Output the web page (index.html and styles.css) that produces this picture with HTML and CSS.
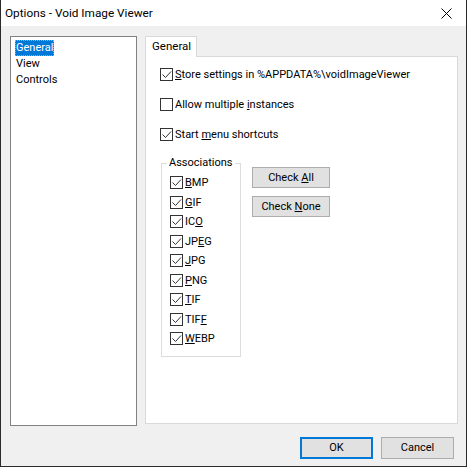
FILE: index.html
```html
<!DOCTYPE html>
<html>
<head>
<meta charset="utf-8">
<link rel="stylesheet" href="styles.css">
</head>
<body>
<div class="window">
  <div class="titlebar">
    <span class="title">Options - Void Image Viewer</span>
    <svg class="close" width="11" height="11" viewBox="0 0 11 11"><path d="M0.5 0.5 L10.5 10.5 M10.5 0.5 L0.5 10.5" stroke="#000" stroke-width="1" fill="none"/></svg>
  </div>
  <div class="client">
    <div class="main">
      <div class="tree">
        <div class="tree-item selected">General</div>
        <div class="tree-item">View</div>
        <div class="tree-item">Controls</div>
      </div>
      <div class="tabs">
        <div class="tab-strip"><div class="tab">General</div></div>
        <div class="panel">
          <div class="options">
            <label class="check"><span class="box checked"><svg width="11" height="11" viewBox="0 0 11 11"><path d="M1.5 5.5 L4.5 8.5 L10 2.5" stroke="#333" stroke-width="1" fill="none"/></svg></span><span><u>S</u>tore settings in %APPDATA%\voidImageViewer</span></label>
            <label class="check"><span class="box"></span><span>Allow multiple <u>i</u>nstances</span></label>
            <label class="check"><span class="box checked"><svg width="11" height="11" viewBox="0 0 11 11"><path d="M1.5 5.5 L4.5 8.5 L10 2.5" stroke="#333" stroke-width="1" fill="none"/></svg></span><span>Start <u>m</u>enu shortcuts</span></label>
          </div>
          <div class="assoc-area">
            <fieldset class="group">
              <legend>Associations</legend>
              <div class="group-list">
                <label class="check item"><span class="box checked"><svg width="11" height="11" viewBox="0 0 11 11"><path d="M1.5 5.5 L4.5 8.5 L10 2.5" stroke="#333" stroke-width="1" fill="none"/></svg></span><span><u>B</u>MP</span></label>
                <label class="check item"><span class="box checked"><svg width="11" height="11" viewBox="0 0 11 11"><path d="M1.5 5.5 L4.5 8.5 L10 2.5" stroke="#333" stroke-width="1" fill="none"/></svg></span><span><u>G</u>IF</span></label>
                <label class="check item"><span class="box checked"><svg width="11" height="11" viewBox="0 0 11 11"><path d="M1.5 5.5 L4.5 8.5 L10 2.5" stroke="#333" stroke-width="1" fill="none"/></svg></span><span>IC<u>O</u></span></label>
                <label class="check item"><span class="box checked"><svg width="11" height="11" viewBox="0 0 11 11"><path d="M1.5 5.5 L4.5 8.5 L10 2.5" stroke="#333" stroke-width="1" fill="none"/></svg></span><span>JP<u>E</u>G</span></label>
                <label class="check item"><span class="box checked"><svg width="11" height="11" viewBox="0 0 11 11"><path d="M1.5 5.5 L4.5 8.5 L10 2.5" stroke="#333" stroke-width="1" fill="none"/></svg></span><span><u>J</u>PG</span></label>
                <label class="check item"><span class="box checked"><svg width="11" height="11" viewBox="0 0 11 11"><path d="M1.5 5.5 L4.5 8.5 L10 2.5" stroke="#333" stroke-width="1" fill="none"/></svg></span><span><u>P</u>NG</span></label>
                <label class="check item"><span class="box checked"><svg width="11" height="11" viewBox="0 0 11 11"><path d="M1.5 5.5 L4.5 8.5 L10 2.5" stroke="#333" stroke-width="1" fill="none"/></svg></span><span><u>T</u>IF</span></label>
                <label class="check item"><span class="box checked"><svg width="11" height="11" viewBox="0 0 11 11"><path d="M1.5 5.5 L4.5 8.5 L10 2.5" stroke="#333" stroke-width="1" fill="none"/></svg></span><span>TIF<u>F</u></span></label>
                <label class="check item"><span class="box checked"><svg width="11" height="11" viewBox="0 0 11 11"><path d="M1.5 5.5 L4.5 8.5 L10 2.5" stroke="#333" stroke-width="1" fill="none"/></svg></span><span><u>W</u>EBP</span></label>
              </div>
            </fieldset>
            <div class="btn-col">
              <button class="btn">Check <u>A</u>ll</button>
              <button class="btn">Check <u>N</u>one</button>
            </div>
          </div>
        </div>
      </div>
    </div>
    <div class="footer">
      <button class="btn dlg default">OK</button>
      <button class="btn dlg">Cancel</button>
    </div>
  </div>
</div>
</body>
</html>
```

FILE: styles.css
```css
html, body {
  margin: 0;
  padding: 0;
}
body {
  font-family: "Roboto", "Noto Sans", sans-serif;
  font-size: 11px;
  color: #000;
}
.window {
  width: 467px;
  height: 467px;
  box-sizing: border-box;
  border: 1px solid #2b2b2b;
  border-top: none;
  display: flex;
  flex-direction: column;
  background: #f0f0f0;
  overflow: hidden;
}
.titlebar {
  height: 26px;
  flex: none;
  background: #fff;
  display: flex;
  align-items: center;
  justify-content: space-between;
  padding: 0 14px 0 4px;
}
.title {
  font-size: 11.8px;
}
.close {
  display: block;
  margin-top: 1px;
}
.client {
  flex: 1;
  display: flex;
  flex-direction: column;
  padding: 10px 0 0 9px;
}
.main {
  display: flex;
  gap: 8px;
}
.tree {
  width: 127px;
  height: 390px;
  box-sizing: border-box;
  border: 1px solid #828282;
  background: #fff;
  padding: 3px 0 0 4px;
}
.tree-item {
  width: fit-content;
  height: 16px;
  line-height: 16px;
  padding: 0 1px;
}
.tree-item.selected {
  background: #0078d7;
  color: #fff;
  outline: 1px dotted #f0a030;
  outline-offset: -1px;
}
.tabs {
  width: 313px;
  display: flex;
  flex-direction: column;
}
.tab-strip {
  height: 20px;
  display: flex;
}
.tab {
  width: 52px;
  height: 21px;
  box-sizing: border-box;
  border: 1px solid #d9d9d9;
  border-bottom: none;
  background: #fff;
  padding-left: 6px;
  line-height: 19px;
  font-size: 11.5px;
  position: relative;
  z-index: 1;
}
.panel {
  height: 368px;
  box-sizing: border-box;
  border: 1px solid #d9d9d9;
  background: #fff;
  padding: 9px 0 0 14px;
}
.options {
  display: flex;
  flex-direction: column;
  gap: 14px;
}
.check {
  display: flex;
  align-items: center;
  height: 16px;
  white-space: nowrap;
}
.box {
  width: 13px;
  height: 13px;
  flex: none;
  box-sizing: border-box;
  border: 1px solid #333;
  background: #fff;
  margin-right: 2px;
  display: flex;
  align-items: center;
  justify-content: center;
}
.box svg {
  display: block;
}
.assoc-area {
  display: flex;
  gap: 11px;
  margin-top: 13px;
  margin-left: 1px;
}
.group {
  width: 80px;
  height: 202px;
  box-sizing: border-box;
  margin: 0;
  padding: 0 0 0 8px;
  border: 1px solid #dcdcdc;
}
.group legend {
  padding: 0 2px;
  margin-left: -3px;
  line-height: 16px;
}
.group-list {
  display: flex;
  flex-direction: column;
  margin-top: 2px;
}
.check.item {
  height: 19.5px;
}
.btn-col {
  display: flex;
  flex-direction: column;
  gap: 8px;
  margin-top: 12px;
}
.btn {
  font-family: inherit;
  font-size: 11px;
  color: #000;
  width: 78px;
  height: 21px;
  box-sizing: border-box;
  background: #e1e1e1;
  border: 1px solid #adadad;
  padding: 0;
  margin: 0;
  line-height: 18px;
}
.footer {
  display: flex;
  justify-content: flex-end;
  gap: 8px;
  margin-top: 11px;
  padding-right: 12px;
}
.btn.dlg {
  width: 73px;
  height: 22px;
}
.btn.default {
  border: 2px solid #0078d7;
}
```
